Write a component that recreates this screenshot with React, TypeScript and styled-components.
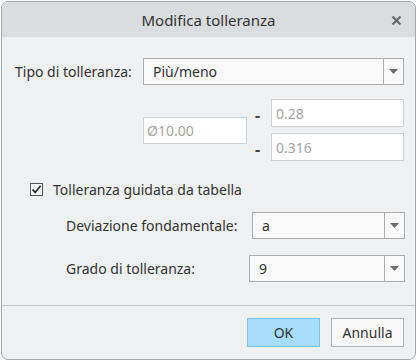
import React, { FC } from 'react';
import styled, { createGlobalStyle } from 'styled-components';

const GlobalStyle = createGlobalStyle`
    html, body {
        margin: 0;
        padding: 0;
        background: #ffffff;
    }
    body {
        font-family: "Noto Sans", "Open Sans", Arial, sans-serif;
        color: #333333;
    }
`;

interface DropdownProps {
    value: string;
    width: number;
}

const Dropdown: FC<DropdownProps> = ({ value, width }) => (
    <Select $width={width}>
        <SelectValue>{value}</SelectValue>
        <SelectArrow>
            <svg width="9" height="5" viewBox="0 0 9 5">
                <path d="M0 0 L9 0 L4.5 5 Z" fill="#6b6b6b" />
            </svg>
        </SelectArrow>
    </Select>
);

const App: FC = () => {
    return (
        <>
            <GlobalStyle />
            <Window>
                <TitleBar>
                    <span />
                    <Title>Modifica tolleranza</Title>
                    <CloseButton>
                        <svg width="11" height="11" viewBox="0 0 11 11">
                            <path d="M1.5 1.5 L9.5 9.5 M9.5 1.5 L1.5 9.5" stroke="#6a6a6a" strokeWidth="2.4" />
                        </svg>
                    </CloseButton>
                </TitleBar>

                <Body>
                    <FieldRow $labelWidth={128}>
                        <Label>Tipo di tolleranza:</Label>
                        <Dropdown value="Più/meno" width={261} />
                    </FieldRow>

                    <ValuesGrid>
                        <NominalBox>Ø10.00</NominalBox>
                        <Dash $row={1}>-</Dash>
                        <LimitBox $row={1}>0.28</LimitBox>
                        <Dash $row={2}>-</Dash>
                        <LimitBox $row={2}>0.316</LimitBox>
                    </ValuesGrid>

                    <CheckRow>
                        <CheckBox>
                            <svg width="11" height="11" viewBox="0 0 11 11">
                                <path d="M1.5 5.5 L4.3 8.4 L9.6 1.8" stroke="#333" strokeWidth="1.8" fill="none" />
                            </svg>
                        </CheckBox>
                        <CheckLabel>Tolleranza guidata da tabella</CheckLabel>
                    </CheckRow>

                    <SubFields>
                        <FieldRow $labelWidth={186}>
                            <Label>Deviazione fondamentale:</Label>
                            <Dropdown value="a" width={153} />
                        </FieldRow>
                        <FieldRow $labelWidth={183}>
                            <Label>Grado di tolleranza:</Label>
                            <Dropdown value="9" width={156} />
                        </FieldRow>
                    </SubFields>
                </Body>

                <Footer>
                    <Button $primary>OK</Button>
                    <Button>Annulla</Button>
                </Footer>
            </Window>
        </>
    );
};

const Window = styled.div`
    margin: 1px 0 0 1px;
    width: 415px;
    height: 359px;
    box-sizing: border-box;
    border: 1px solid #a4a6a8;
    border-radius: 7px;
    background: #eff0f2;
    overflow: hidden;
    display: flex;
    flex-direction: column;
`;

const TitleBar = styled.div`
    height: 35px;
    flex: none;
    background: #dadddf;
    display: grid;
    grid-template-columns: 40px 1fr 40px;
    align-items: center;
`;

const Title = styled.div`
    text-align: center;
    font-size: 15px;
    color: #333;
    padding-top: 1px;
`;

const CloseButton = styled.div`
    display: flex;
    justify-content: center;
    padding-left: 3px;
    padding-top: 1px;
`;

const Body = styled.div`
    flex: 1;
    padding: 21px 12px 0 13px;
    display: flex;
    flex-direction: column;
`;

const FieldRow = styled.div<{ $labelWidth: number }>`
    display: grid;
    grid-template-columns: ${p => p.$labelWidth}px auto;
    align-items: center;
`;

const Label = styled.div`
    font-size: 14px;
    color: #333;
    white-space: nowrap;
`;

const Select = styled.div<{ $width: number }>`
    width: ${p => p.$width}px;
    height: 27px;
    box-sizing: border-box;
    border: 1px solid #acacac;
    background: #f9f9f9;
    display: flex;
`;

const SelectValue = styled.div`
    flex: 1;
    padding-left: 9px;
    font-size: 14px;
    line-height: 25px;
    color: #333;
`;

const SelectArrow = styled.div`
    width: 19px;
    border-left: 1px solid #acacac;
    display: flex;
    align-items: center;
    justify-content: center;
`;

const ValuesGrid = styled.div`
    margin: 14px 0 0 128px;
    display: grid;
    grid-template-columns: 104px 24px 133px;
    grid-template-rows: 28px 28px;
    row-gap: 6px;
    align-items: center;
`;

const InputBox = styled.div`
    box-sizing: border-box;
    border: 1px solid #cfd0d2;
    background: #ffffff;
    font-size: 14px;
    color: #a5a5a5;
    padding-left: 3px;
    display: flex;
    align-items: center;
`;

const NominalBox = styled(InputBox)`
    grid-column: 1;
    grid-row: 1 / span 2;
    height: 27px;
`;

const LimitBox = styled(InputBox)<{ $row: number }>`
    grid-column: 3;
    grid-row: ${p => p.$row};
    height: 28px;
    padding-left: 4px;
`;

const Dash = styled.div<{ $row: number }>`
    grid-column: 2;
    grid-row: ${p => p.$row};
    font-size: 16px;
    font-weight: bold;
    color: #444;
    padding-left: 8px;
    margin-top: 4px;
    line-height: 20px;
`;

const CheckRow = styled.div`
    margin: 19px 0 0 15px;
    display: flex;
    align-items: center;
    gap: 10px;
`;

const CheckBox = styled.div`
    width: 13px;
    height: 13px;
    box-sizing: border-box;
    border: 1px solid #555;
    background: #f7f7f7;
    display: flex;
    align-items: center;
    justify-content: center;
`;

const CheckLabel = styled.div`
    font-size: 14px;
    color: #333;
`;

const SubFields = styled.div`
    margin: 13px 0 0 51px;
    display: flex;
    flex-direction: column;
    gap: 16px;
`;

const Footer = styled.div`
    flex: none;
    height: 54px;
    border-top: 1px solid #c4c6c8;
    display: flex;
    justify-content: flex-end;
    align-items: flex-start;
    padding: 12px 11px 0 0;
    gap: 11px;
    box-sizing: border-box;
`;

const Button = styled.div<{ $primary?: boolean }>`
    width: 73px;
    height: 29px;
    box-sizing: border-box;
    border: 1px solid ${p => (p.$primary ? '#72c7f6' : '#b3b3b3')};
    background: ${p => (p.$primary ? '#a6ddfd' : '#f8f8f8')};
    font-size: 14px;
    color: #333;
    display: flex;
    align-items: center;
    justify-content: center;
`;

export default App;
